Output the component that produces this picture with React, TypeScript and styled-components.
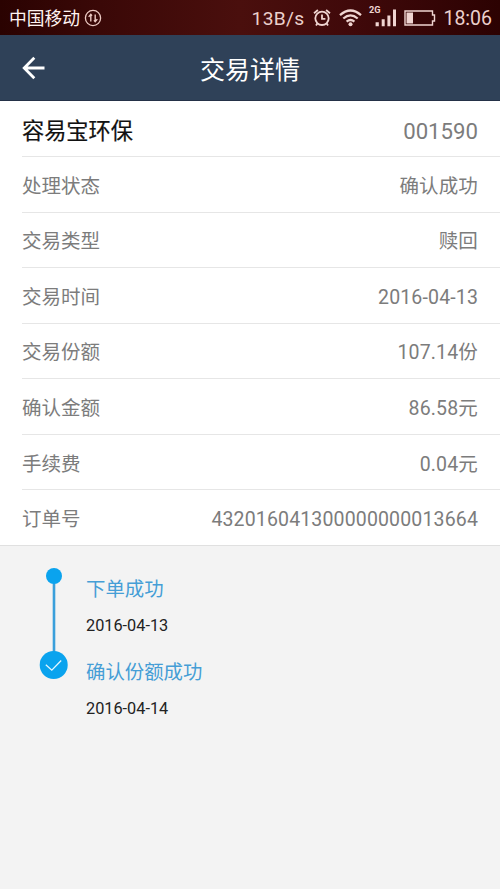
import React from "react";
import styled, { createGlobalStyle } from "styled-components";

const Global = createGlobalStyle`
  * { box-sizing: border-box; }
  body {
    margin: 0;
    background: #f3f3f3;
    font-family: Roboto, "Noto Sans CJK SC", sans-serif;
  }
`;

const Screen = styled.div`
  width: 500px;
  height: 889px;
  overflow: hidden;
  background: #f3f3f3;
`;

const StatusBar = styled.header`
  display: flex;
  align-items: center;
  height: 35px;
  padding: 0 8px 0 9px;
  background: linear-gradient(90deg, #2a0201 0%, #3a0807 20%, #4a0f0d 48%, #40090a 70%, #2c0202 100%);
  color: #ecd0cc;
`;

const Carrier = styled.span`
  color: #fff3f1;
  font-size: 17.8px;
  line-height: 35px;
  margin-right: 4px;
  padding-top: 1px;
`;

const Speed = styled.span`
  margin-left: auto;
  font-size: 19.2px;
  letter-spacing: 0.3px;
  line-height: 35px;
  padding-top: 2px;
`;

const Clock = styled.span`
  font-size: 19.5px;
  line-height: 35px;
  padding-top: 2px;
`;

const Glyph = styled.svg<{ $left?: number; $right?: number }>`
  display: block;
  flex: none;
  margin-left: ${(p) => p.$left ?? 0}px;
  margin-right: ${(p) => p.$right ?? 0}px;
`;

const NavBar = styled.nav`
  display: grid;
  grid-template-columns: 66px 1fr 66px;
  align-items: center;
  height: 66px;
  background: #2f4158;
  border-bottom: 1px solid #243147;
`;

const Title = styled.h1`
  margin: 0;
  padding-top: 7px;
  text-align: center;
  font-size: 25px;
  line-height: 36px;
  font-weight: 400;
  color: #fff;
`;

const Details = styled.section`
  background: #fff;
  border-bottom: 1px solid #e0e0e0;
`;

const Row = styled.div<{ $head?: boolean }>`
  display: flex;
  align-items: center;
  justify-content: space-between;
  height: ${(p) => (p.$head ? 55 : 55.57)}px;
  margin-left: 22px;
  padding: ${(p) => (p.$head ? 4 : 5)}px 22px 0 0;
  color: #7c7c7c;
  font-size: ${(p) => (p.$head ? 22.2 : 19.5)}px;
  line-height: 24px;
  & + & { border-top: 1px solid #e6e6e6; }
`;

const Label = styled.span<{ $head?: boolean }>`
  padding-top: ${(p) => (p.$head ? 1 : 0)}px;
  color: ${(p) => (p.$head ? "#111" : "inherit")};
  -webkit-text-stroke: ${(p) => (p.$head ? "0.2px #111" : "0")};
`;

const Value = styled.span<{ $head?: boolean }>`
  letter-spacing: ${(p) => (p.$head ? 0 : 0.15)}px;
`;

const Timeline = styled.section`
  display: grid;
  grid-template-columns: 47px 1fr;
  padding: 21px 0 0 39px;
`;

const Steps = styled.div`
  padding-top: 8px;
`;

const Step = styled.div`
  height: 83.3px;
`;

const StepName = styled.div`
  font-size: 19.4px;
  line-height: 30px;
  color: #459ed6;
`;

const StepDate = styled.div`
  margin-top: 9px;
  font-size: 16.3px;
  line-height: 24px;
  color: #222;
`;

const rows = [
  ["容易宝环保", "001590"],
  ["处理状态", "确认成功"],
  ["交易类型", "赎回"],
  ["交易时间", "2016-04-13"],
  ["交易份额", "107.14份"],
  ["确认金额", "86.58元"],
  ["手续费", "0.04元"],
  ["订单号", "432016041300000000013664"],
];

const steps = [
  ["下单成功", "2016-04-13"],
  ["确认份额成功", "2016-04-14"],
];

const DataIcon = () => (
  <Glyph width="18" height="18" viewBox="0 0 18 18" fill="none" stroke="#ecc9c3" strokeWidth="1.3">
    <circle cx="9" cy="9" r="7.6" />
    <path d="M6.8 12.6V6M4.7 7.9 6.8 5.4 8 6.8M11.2 5.4V12M13.3 10.1l-2.1 2.5L10 11.2" strokeWidth="1.4" />
  </Glyph>
);

const AlarmIcon = () => (
  <Glyph $left={9} width="18" height="18" viewBox="0 0 18 18" fill="none" stroke="#f0d5d1" strokeWidth="1.8">
    <circle cx="9" cy="9.3" r="6.7" />
    <path d="M9 5.5v4.3h3.4M1 4.2 4.9 1M17 4.2 13.1 1M4.5 14.2 3 16.4M13.5 14.2l1.5 2.2" />
  </Glyph>
);

const WifiIcon = () => (
  <Glyph $left={8} width="23" height="18" viewBox="0 0 23 18" fill="none" stroke="#f0d5d1" strokeWidth="2.3">
    <path d="M1 6.1Q11.5-3.1 22 6.1M4.3 9.5q7.2-6.2 14.4 0M7.6 12.6q3.9-3.2 7.8 0" />
    <circle cx="11.5" cy="15.2" r="2" fill="#f0d5d1" stroke="none" />
  </Glyph>
);

const SignalIcon = () => (
  <Glyph $left={6} width="30" height="32" viewBox="-1 -4 30 32" fill="#f0d5d1">
    <text x="0" y="7.4" fontFamily="Roboto" fontWeight="700" fontSize="9.2">2G</text>
    <path d="M6.6 16.3h3.2v4H6.6zM12.7 13.3h3v7h-3zM18.4 9.4h3v10.9h-3zM24 3.4h3v16.9h-3z" />
  </Glyph>
);

const BatteryIcon = () => (
  <Glyph $left={6} $right={7} width="32" height="16" viewBox="0 0 32 16" fill="none" stroke="#f0d5d1" strokeWidth="1.4">
    <path d="M1 1h27.5v4h2v6h-2v4H1z" />
    <path d="M2.5 2.5h6.5v11H2.5z" fill="#f0d5d1" stroke="none" />
  </Glyph>
);

const BackIcon = () => (
  <Glyph $left={22} width="24" height="24" viewBox="0 0 24 24" fill="none" stroke="#fff" strokeWidth="2.8">
    <path d="M22.5 12H2M12.3 1.8 2.2 12l10.1 10.2" />
  </Glyph>
);

const ProgressTrack = () => (
  <Glyph width="29" height="112" viewBox="0 0 29 112">
    <path d="M15 9v80" stroke="#3a9fdb" strokeWidth="2.6" />
    <circle cx="15" cy="9" r="8" fill="#0aa3ee" />
    <circle cx="14.7" cy="98" r="14" fill="#0aa3ee" />
    <path d="m6.8 97.8 6 5.4 9.4-9.7" fill="none" stroke="#e6f7ff" strokeWidth="1.3" />
  </Glyph>
);

export default function App() {
  return (
    <Screen>
      <Global />
      <StatusBar>
        <Carrier>中国移动</Carrier>
        <DataIcon />
        <Speed>13B/s</Speed>
        <AlarmIcon />
        <WifiIcon />
        <SignalIcon />
        <BatteryIcon />
        <Clock>18:06</Clock>
      </StatusBar>
      <NavBar>
        <BackIcon />
        <Title>交易详情</Title>
      </NavBar>
      <Details>
        {rows.map(([label, value], i) => (
          <Row key={label} $head={i === 0}>
            <Label $head={i === 0}>{label}</Label>
            <Value $head={i === 0}>{value}</Value>
          </Row>
        ))}
      </Details>
      <Timeline>
        <ProgressTrack />
        <Steps>
          {steps.map(([name, date]) => (
            <Step key={name}>
              <StepName>{name}</StepName>
              <StepDate>{date}</StepDate>
            </Step>
          ))}
        </Steps>
      </Timeline>
    </Screen>
  );
}
